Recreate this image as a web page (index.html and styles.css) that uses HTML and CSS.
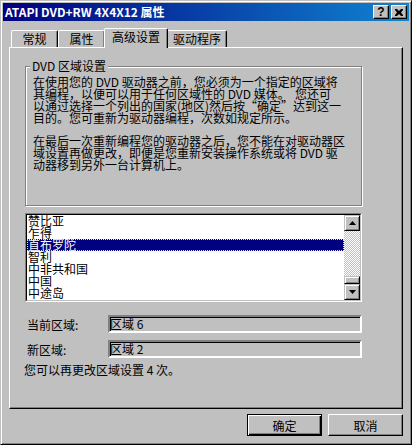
FILE: index.html
```html
<!DOCTYPE html>
<html lang="zh-CN">

<head>
    <meta charset="UTF-8">
    <meta name="viewport" content="width=device-width, initial-scale=1.0">
    <title>ATAPI DVD+RW 4X4X12 属性</title>
    <link rel="stylesheet" href="styles.css">
</head>

<body>

    <div class="window">
        <div class="titlebar">
            <span class="title">ATAPI DVD+RW 4X4X12 属性</span>
            <div class="title-buttons">
                <button class="cap-btn help">?</button>
                <button class="cap-btn">
                    <svg width="8" height="7" viewBox="0 0 8 7">
                        <path d="M0 0h2l2 2 2-2h2v1L6 3.5 8 6v1H6L4 5 2 7H0V6l2-2.5L0 1z" fill="#000"/>
                    </svg>
                </button>
            </div>
        </div>

        <!-- Tabs -->
        <div class="tabs">
            <div class="tab tab-general">常规</div>
            <div class="tab tab-props">属性</div>
            <div class="tab tab-advanced active">高级设置</div>
            <div class="tab tab-driver">驱动程序</div>
        </div>

        <div class="panel">
            <fieldset class="group">
                <legend>DVD 区域设置</legend>
                <p>在使用您的 DVD 驱动器之前，您必须为一个指定的区域将<br>其编程，以便可以用于任何区域性的 DVD 媒体。&nbsp; 您还可<br>以通过选择一个列出的国家(地区)然后按“确定”达到这一<br>目的。您可重新为驱动器编程，次数如规定所示。</p>
                <p>在最后一次重新编程您的驱动器之后，您不能在对驱动器区<br>域设置再做更改，即便是您重新安装操作系统或将 DVD 驱<br>动器移到另外一台计算机上。</p>
            </fieldset>

            <!-- Region list -->
            <div class="listbox">
                <div class="listbox-inner">
                    <ul class="items">
                        <li>赞比亚</li>
                        <li>乍得</li>
                        <li class="selected">直布罗陀</li>
                        <li>智利</li>
                        <li>中非共和国</li>
                        <li>中国</li>
                        <li>中途岛</li>
                    </ul>
                    <div class="scrollbar">
                        <div class="sb-btn">
                            <svg width="7" height="4" viewBox="0 0 7 4"><polygon points="3.5,0 7,4 0,4" fill="#000"/></svg>
                        </div>
                        <div class="sb-track">
                            <div class="sb-thumb"></div>
                        </div>
                        <div class="sb-btn">
                            <svg width="7" height="4" viewBox="0 0 7 4"><polygon points="0,0 7,0 3.5,4" fill="#000"/></svg>
                        </div>
                    </div>
                </div>
            </div>

            <div class="field-row first">
                <label>当前区域:</label>
                <div class="field">区域 6</div>
            </div>
            <div class="field-row">
                <label>新区域:</label>
                <div class="field">区域 2</div>
            </div>
            <p class="note">您可以再更改区域设置 4 次。</p>
        </div>

        <div class="actions">
            <button class="btn default">确定</button>
            <button class="btn">取消</button>
        </div>
    </div>

</body>

</html>
```

FILE: styles.css
```css
* {
    box-sizing: border-box;
}

body {
    margin: 0;
    background: #c0c0c0;
    font-family: "Noto Sans CJK SC", "Noto Sans", sans-serif;
    font-size: 12px;
    color: #000;
}

.window {
    width: 412px;
    height: 445px;
    padding: 2px;
    border: 1px solid;
    border-color: #c0c0c0 #000 #000 #c0c0c0;
    box-shadow: inset 1px 1px #fff, inset -1px -1px #808080;
    display: flex;
    flex-direction: column;
}

/* title bar */
.titlebar {
    height: 18px;
    padding: 0 2px;
    display: flex;
    align-items: center;
    justify-content: space-between;
    background: linear-gradient(to right, #000080, #1084d0);
    color: #fff;
}

.title {
    font-weight: bold;
    line-height: 18px;
    white-space: nowrap;
}

.title-buttons {
    display: flex;
    gap: 2px;
}

.cap-btn {
    width: 16px;
    height: 14px;
    padding: 0;
    border: 1px solid;
    border-color: #fff #000 #000 #fff;
    box-shadow: inset -1px -1px #808080;
    background: #c0c0c0;
    display: flex;
    align-items: center;
    justify-content: center;
}

.cap-btn.help {
    font-family: "Liberation Sans", sans-serif;
    font-weight: bold;
    font-size: 12px;
    line-height: 12px;
    color: #000;
}

/* tabs */
.tabs {
    display: flex;
    align-items: flex-end;
    height: 20px;
    margin: 7px 0 0 8px;
    position: relative;
    z-index: 1;
}

.tab {
    height: 17px;
    margin-bottom: 1px;
    border: 1px solid;
    border-bottom: none;
    border-color: #fff #000 transparent #fff;
    border-radius: 2px 2px 0 0;
    box-shadow: inset -1px 0 #808080;
    background: #c0c0c0;
    text-align: center;
    line-height: 15px;
}

.tab-general { width: 47px; }
.tab-props { width: 47px; }
.tab-driver { width: 60px; }

.tab-advanced {
    width: 64px;
}

.tab.active {
    height: 20px;
    margin: 0 -1px;
    line-height: 16px;
    position: relative;
}

/* tab page */
.panel {
    margin: -1px 6px 0 6px;
    height: 362px;
    padding-left: 15px;
    border: 1px solid;
    border-color: #fff #000 #000 #fff;
    box-shadow: inset -1px -1px #808080;
}

.group {
    margin: 12px 0 0 0;
    width: 337px;
    height: 146px;
    min-width: 0;
    padding: 4px 0 0 7px;
    border: 1px solid #808080;
    box-shadow: 1px 1px #fff, inset 1px 1px #fff;
}

.group legend {
    margin-left: -3px;
    padding: 0 2px;
    line-height: 12px;
    background: #c0c0c0;
}

.group p {
    margin: 0;
    line-height: 12px;
    white-space: nowrap;
}

.group p + p {
    margin-top: 11px;
}

/* list box */
.listbox {
    margin-top: 7px;
    width: 337px;
    height: 89px;
    border: 1px solid;
    border-color: #808080 #fff #fff #808080;
}

.listbox-inner {
    height: 100%;
    display: flex;
    border: 1px solid;
    border-color: #000 #c0c0c0 #c0c0c0 #000;
    background: #fff;
}

.items {
    flex: 1;
    margin: 0;
    padding: 0;
    list-style: none;
}

.items li {
    height: 12px;
    line-height: 12px;
    padding-left: 1px;
    white-space: nowrap;
}

.items li.selected {
    background: #000080;
    color: #fff;
    outline: 1px dotted #ffff00;
    outline-offset: -1px;
}

.scrollbar {
    width: 16px;
    display: flex;
    flex-direction: column;
}

.sb-btn {
    height: 16px;
    display: flex;
    align-items: center;
    justify-content: center;
    border: 1px solid;
    border-color: #c0c0c0 #000 #000 #c0c0c0;
    box-shadow: inset 1px 1px #fff, inset -1px -1px #808080;
    background: #c0c0c0;
}

.sb-track {
    flex: 1;
    display: flex;
    flex-direction: column;
    justify-content: flex-end;
    background: repeating-conic-gradient(#fff 0 25%, #c0c0c0 0 50%) 0 0 / 2px 2px;
}

.sb-thumb {
    height: 8px;
    border: 1px solid;
    border-color: #c0c0c0 #000 #000 #c0c0c0;
    box-shadow: inset 1px 1px #fff, inset -1px -1px #808080;
    background: #c0c0c0;
}

/* region fields */
.field-row {
    display: flex;
    align-items: center;
    margin-top: 7px;
}

.field-row.first {
    margin-top: 13px;
}

.field-row label {
    width: 83px;
    padding-left: 2px;
}

.field {
    width: 254px;
    height: 18px;
    line-height: 14px;
    border: 2px solid;
    border-color: #808080 #fff #fff #808080;
    box-shadow: inset 1px 1px #000;
}

.note {
    margin: 6px 0 0 -1px;
    line-height: 12px;
}

/* dialog buttons */
.actions {
    display: flex;
    justify-content: flex-end;
    gap: 6px;
    margin-top: 5px;
    padding-right: 6px;
}

.btn {
    width: 75px;
    height: 22px;
    padding: 0;
    font-family: inherit;
    font-size: 12px;
    color: #000;
    background: #c0c0c0;
    border: 1px solid;
    border-color: #fff #000 #000 #fff;
    box-shadow: inset -1px -1px #808080;
}

.btn.default {
    border-color: #000;
    box-shadow: inset 1px 1px #fff, inset -1px -1px #000, inset -2px -2px #808080;
}
```
